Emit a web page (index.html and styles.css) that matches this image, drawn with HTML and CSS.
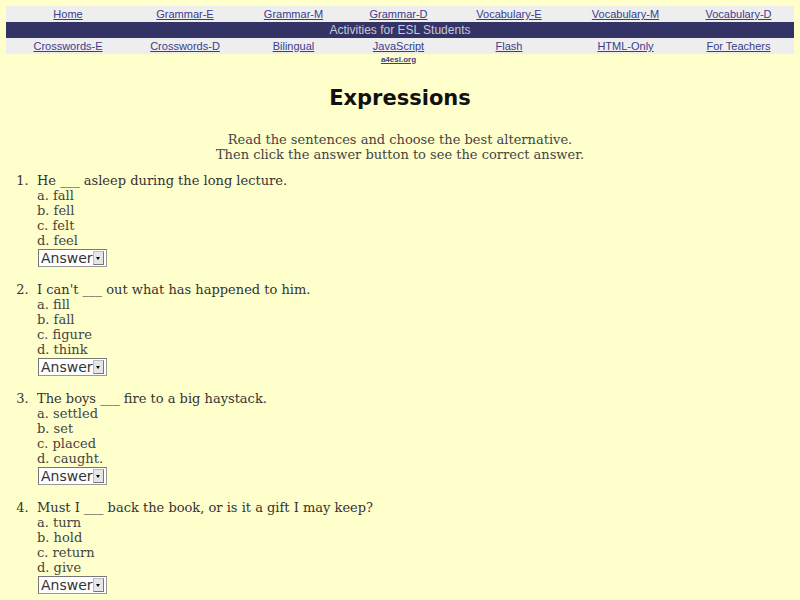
FILE: index.html
```html
<!DOCTYPE html>
<html>
<head>
<meta charset="utf-8">
<title>Expressions</title>
<link rel="stylesheet" href="styles.css">
</head>
<body>
<div class="page">
  <div class="nav">
    <div class="cell"><a href="#">Home</a></div>
    <div class="cell"><a href="#">Grammar-E</a></div>
    <div class="cell"><a href="#">Grammar-M</a></div>
    <div class="cell"><a href="#">Grammar-D</a></div>
    <div class="cell"><a href="#">Vocabulary-E</a></div>
    <div class="cell"><a href="#">Vocabulary-M</a></div>
    <div class="cell"><a href="#">Vocabulary-D</a></div>
    <div class="banner">Activities for ESL Students</div>
    <div class="cell"><a href="#">Crosswords-E</a></div>
    <div class="cell"><a href="#">Crosswords-D</a></div>
    <div class="cell"><a href="#">Bilingual</a></div>
    <div class="cell"><a href="#">JavaScript</a></div>
    <div class="cell"><a href="#">Flash</a></div>
    <div class="cell"><a href="#">HTML-Only</a></div>
    <div class="cell"><a href="#">For Teachers</a></div>
    <div class="site"><a href="#">a4esl.org</a></div>
  </div>

  <h1 class="title">Expressions</h1>

  <p class="intro">Read the sentences and choose the best alternative.<br>Then click the answer button to see the correct answer.</p>

  <ol class="quiz">
    <li class="q">He ___ asleep during the long lecture.
      <div class="opt">a. fall</div>
      <div class="opt">b. fell</div>
      <div class="opt">c. felt</div>
      <div class="opt">d. feel</div>
      <div class="answer"><span class="answer-text">Answer</span><span class="answer-btn"></span></div>
    </li>
    <li class="q">I can't ___ out what has happened to him.
      <div class="opt">a. fill</div>
      <div class="opt">b. fall</div>
      <div class="opt">c. figure</div>
      <div class="opt">d. think</div>
      <div class="answer"><span class="answer-text">Answer</span><span class="answer-btn"></span></div>
    </li>
    <li class="q">The boys ___ fire to a big haystack.
      <div class="opt">a. settled</div>
      <div class="opt">b. set</div>
      <div class="opt">c. placed</div>
      <div class="opt">d. caught.</div>
      <div class="answer"><span class="answer-text">Answer</span><span class="answer-btn"></span></div>
    </li>
    <li class="q">Must I ___ back the book, or is it a gift I may keep?
      <div class="opt">a. turn</div>
      <div class="opt">b. hold</div>
      <div class="opt">c. return</div>
      <div class="opt">d. give</div>
      <div class="answer"><span class="answer-text">Answer</span><span class="answer-btn"></span></div>
    </li>
  </ol>
</div>
</body>
</html>
```
FILE: styles.css
```css
html, body {
  margin: 0;
  padding: 0;
  background: #ffffcc;
}
.page {
  padding: 6px 6px 0 6px;
}
.nav {
  display: grid;
  grid-template-columns: 124px 110px 107px 103px 118px 115px 111px;
  grid-auto-rows: 16px;
  font-family: "Liberation Sans", Arial, sans-serif;
  font-size: 11px;
}
.cell {
  background: #eeeeee;
  text-align: center;
  line-height: 16px;
}
.cell a, .site a {
  color: #3c3c8c;
  text-decoration: underline;
}
.banner {
  grid-column: 1 / -1;
  background: #333366;
  color: #c8c8d8;
  text-align: center;
  font-size: 12px;
  line-height: 16px;
}
.site {
  grid-column: 4;
  text-align: center;
  font-size: 8px;
  font-weight: bold;
  line-height: 11px;
}
.title {
  margin: 14px 0 0 0;
  text-align: center;
  font-family: "Comic Sans MS", "DejaVu Sans", sans-serif;
  font-weight: bold;
  font-size: 21px;
  line-height: 28px;
  color: #111111;
}
.intro {
  margin: 20px 0 0 0;
  text-align: center;
  font-family: "DejaVu Serif", serif;
  font-size: 13px;
  line-height: 15px;
  color: #444444;
}
.quiz {
  margin: 11px 0 0 0;
  padding-left: 31px;
  font-family: "DejaVu Serif", serif;
  font-size: 13px;
  line-height: 15px;
  color: #333333;
}
.q {
  margin-bottom: 15px;
  padding-left: 0;
}
.q::marker {
  content: counter(list-item) ".\00a0\00a0";
}
.opt {
  color: #444444;
}
.answer {
  display: flex;
  align-items: center;
  box-sizing: border-box;
  margin-top: 1px;
  margin-left: 1px;
  width: 69px;
  height: 18px;
  background: #ffffff;
  border: 1px solid #999999;
  border-top-color: #777777;
  border-left-color: #777777;
  font-family: "DejaVu Sans", sans-serif;
  font-size: 14px;
  color: #333333;
}
.answer-text {
  flex: 1;
  padding-left: 2px;
  line-height: 16px;
}
.answer-btn {
  position: relative;
  width: 9px;
  height: 12px;
  margin-right: 2px;
  background: #e6e6e6;
  border: 1px solid #bbbbbb;
  border-right-color: #777777;
  border-bottom-color: #777777;
}
.answer-btn::after {
  content: "";
  position: absolute;
  left: 2px;
  top: 5px;
  border-left: 2px solid transparent;
  border-right: 2px solid transparent;
  border-top: 3px solid #000000;
}
```
